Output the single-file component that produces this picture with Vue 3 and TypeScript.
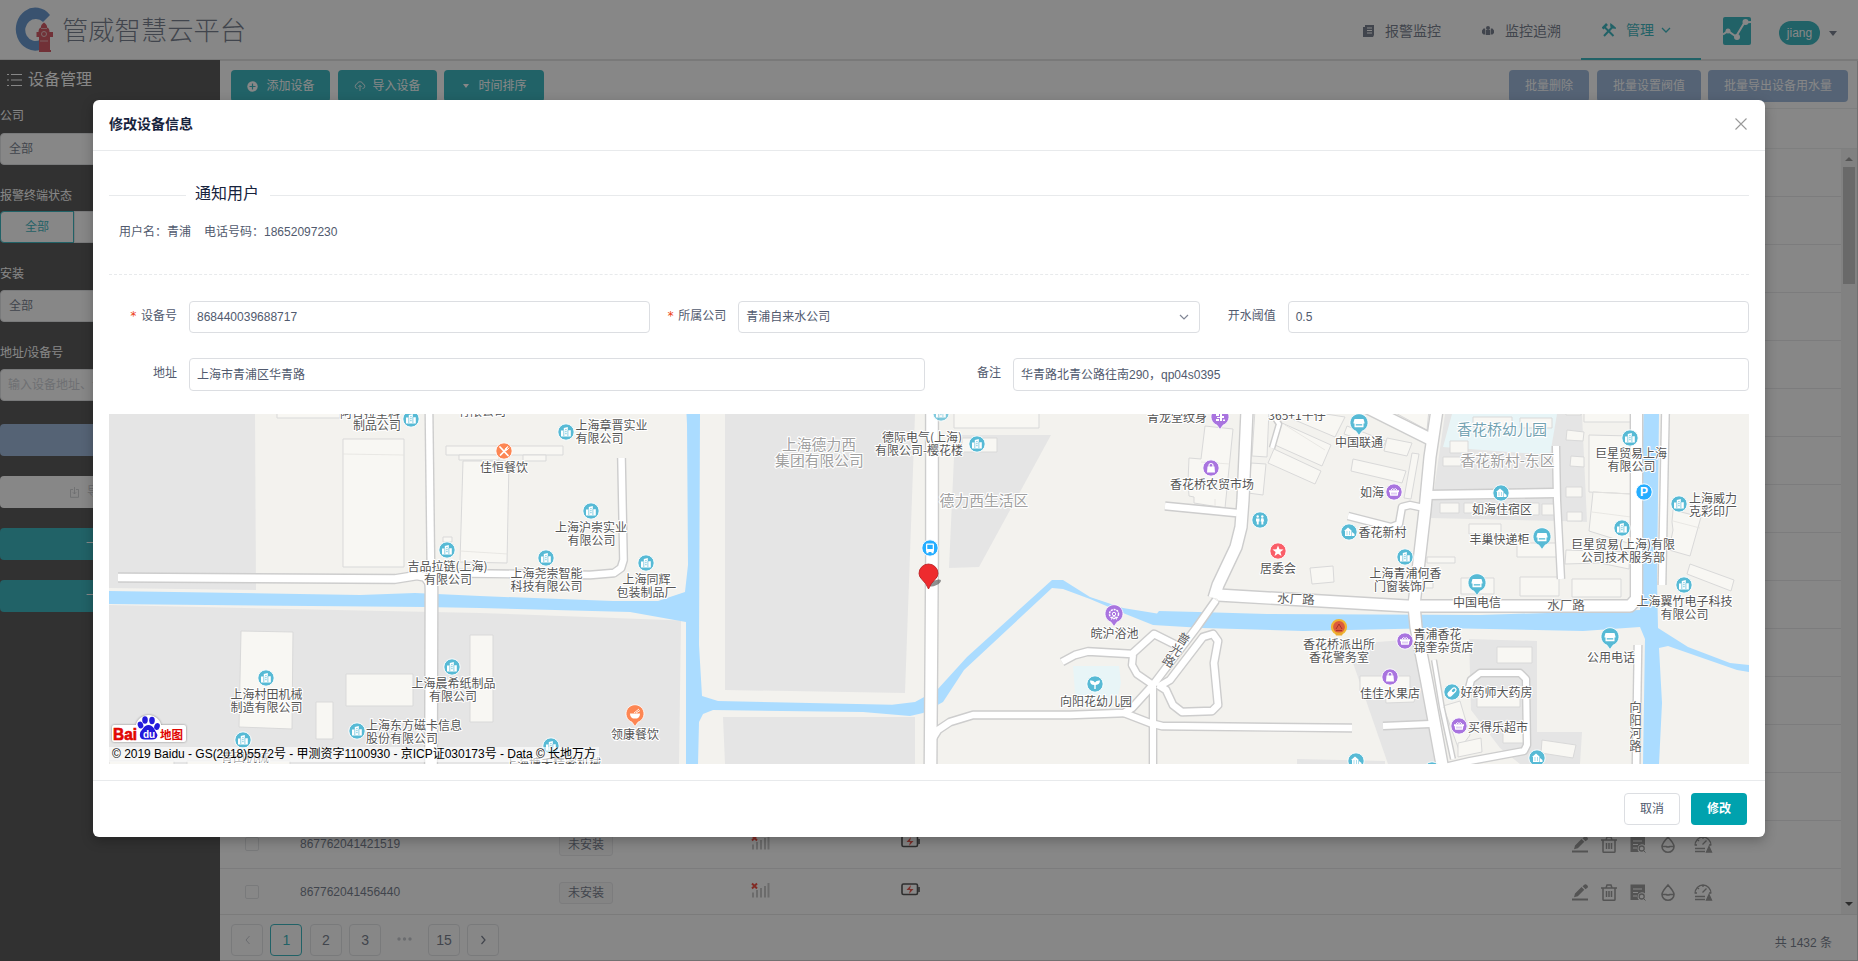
<script setup lang="ts">
type Pt = [number, number]
interface Line { text: string; x: number; y: number; anchor?: 'start' | 'middle'; kind?: string; rotate?: number }
interface Marker { icon: string; x: number; y: number; color: string; pin?: boolean; faded?: boolean }

const TEAL = '#57bad5'
const PURPLE = '#a974df'
const ORANGE = '#fd8653'
const BLUE = '#25adff'

const grey: string[] = [
  '109,414 255,414 256,590 109,588',
  '109,605 480,613 681,620.5 679,764 109,764',
  '725,414 915,414 905,693 725,690',
  '723,717 915,717 915,764 725,764',
  '955,435 1051,435 979,567 949,568',
  '1445,414 1582,414 1587,522 1560,521 1430,518',
  '1352,660 1365,643 1415,639 1442,764 1388,764',
  '1469,639 1537,641 1537,732 1582,732 1580,764 1520,764 1500,748 1471,710',
  '1297,759 1385,761 1385,764 1297,764',
]

const cyan: string[] = [
  '1452,414 1557,414 1550,455 1443,447',
  '1073,666 1119,666 1121,683 1117,700 1104,706 1076,706',
]

const water: string[] = [
  '109,591 360,595 415,593 480,596 613,601 658,601 685,592 688,565 687,424 686.5,414 700,414 699,645 702,696 718,701 892,704.7 915,702 937,690 967,657 1052,580 1063,580 1090,597 1123,608 1157,613.5 1159,611 1198,612 1267,614 1480,615 1640,610 1643.5,414 1659,414 1657,580 1658,628 1688,647 1730,663 1749,665 1749,672 1737,670 1668,646 1659,648 1662,703 1659,764 1643,764 1645,639 1640,627 1583,631 1440,628 1303,631 1203,628 1153,625 1123,613 1090,599 1063,589 1052,588 964,670 943,702 923,713 910,716 863,712 713,710 703,714 699,722 698,764 686,764 686,622 630,612 480,608 425,607 109,604',
]

function rect(x1: number, y1: number, x2: number, y2: number): string {
  return `${x1},${y1} ${x2},${y1} ${x2},${y2} ${x1},${y2}`
}

const buildings: string[] = [
  rect(343, 439, 404, 567), rect(277, 410, 340, 418), rect(446, 446, 563, 455), rect(459, 455, 499, 460),
  rect(523, 455, 546, 461), '463,461 509,461 507,563 460,562', rect(443, 537, 452, 542),
  '241,631 293,632 292,729 239,727', rect(346, 674, 413, 706), rect(316, 702, 333, 739), rect(470, 635, 493, 722),
  rect(109, 761, 174, 766), rect(187, 761, 290, 766),
  rect(954, 410, 1039, 428), rect(962, 438, 997, 452), rect(857, 454, 863, 467),
  '1205,426 1233,429 1225,508 1194,503 1194,497 1189,496 1188,482 1189,458 1201,459',
  '1255,410 1269,410 1267,457 1252,456', '1251,463 1266,464 1263,495 1248,493',
  '1282,423 1331,445 1322,466 1275,445', '1274,449 1321,471 1315,484 1268,463', '1300,410 1345,417 1335,437 1290,418',
  '1310,568 1333,566 1334,582 1312,584', '1353,459 1406,471 1402,483 1351,471', '1412,453 1419,454 1411,499 1404,498',
  '1387,438 1412,443 1407,456 1384,451', '1390,410 1429,410 1427,430', '1347,426 1386,441 1383,447 1344,434', rect(1360, 676, 1410, 691),
  '1385,690 1417,690 1414,702 1386,703', rect(1427, 557, 1455, 563), rect(1425, 580, 1433, 588),
  rect(1450, 441, 1468, 453), rect(1443, 457, 1461, 466), rect(1473, 417, 1512, 427), rect(1520, 418, 1552, 428),
  '1567,430 1584,432 1583,441 1566,440', '1571,456 1584,457 1584,467 1570,466', rect(1566, 487, 1582, 497), rect(1567, 512, 1582, 521),
  rect(1566, 410, 1581, 415), rect(1584, 410, 1631, 422), '1589,435 1631,436 1631,494 1589,492', '1593,492 1631,494 1631,544 1589,531',
  '1566,550 1630,552 1629,569 1600,563 1565,564',
  rect(1440, 503, 1459, 513), rect(1464, 503, 1490, 513), rect(1523, 503, 1539, 515), rect(1542, 504, 1559, 515),
  rect(1469, 524, 1501, 534), rect(1517, 543, 1559, 557), rect(1461, 578, 1494, 594), rect(1520, 577, 1559, 596), rect(1572, 579, 1621, 597),
  rect(1497, 647, 1532, 663), rect(1477, 690, 1520, 707), rect(1503, 723, 1527, 743), '1542,740 1576,745 1573,758 1541,753',
  '1443,706 1460,701 1470,735 1459,750', '1458,743 1481,738 1482,752 1458,757', '1673,510 1701,517 1690,556 1669,550 1673,530 1672,522', '1690,564 1734,580 1731,591 1687,574',
]

const seams: string[] = ['343,454 404,455', '460,551 508,554', '1201,462 1230,464', '1673,521 1700,528', '1285,425 1325,450', '1593,492 1631,494', '1592,512 1631,517', '1215,499 1215,506']

interface Road { w: number; pts: string }
const roads: Road[] = [
  { w: 7.5, pts: '118,577.5 395,579 417,575.5 425,577 430,584' },
  { w: 6.5, pts: '430,573 520,574 590,575 614,573 621,568 623.5,560 621.5,458' },
  { w: 6.5, pts: '429,410 431,575' },
  { w: 11.5, pts: '431,575 431.5,590 431,770' },
  { w: 11.5, pts: '932,410 932,560 930.5,770' },
  { w: 6.5, pts: '933,738 938,730 950,722 973,715 1070,715 1124,713 1132,708 1153,685 1197,627 1216,600' },
  { w: 6.5, pts: '1124,713 1150,723 1162,726 1352,728' },
  { w: 6, pts: '1153,685 1153,770' },
  { w: 6.5, pts: '1062,662 1075,655 1088,651.5 1132,654 1154,634 1180,647' },
  { w: 6, pts: '1133,655 1132,665 1137,674 1153,685' },
  { w: 6.5, pts: '1158,687 1170,680 1203,637 1213,634 1218,641 1214,663 1218,705 1212,711 1182,712 1173,705 1166,690 1158,685' },
  { w: 6.5, pts: '1165,506 1237,513' },
  { w: 11, pts: '1247,410 1243,500 1241,527 1236,547 1218,585 1214,598' },
  { w: 11, pts: '1218,595 1407,606 1630,606 1636.5,599 1636.5,410' },
  { w: 11, pts: '1437,410 1430,457 1425,510 1414,605 1416,627 1427,683 1443,770' },
  { w: 11, pts: '1368,408 1430,439' },
  { w: 6, pts: '1348,516 1391,527 1399,524 1402,507 1410,505 1424,508' },
  { w: 8, pts: '1427,495 1555,493' },
  { w: 6, pts: '1556,446 1557,500 1561,579' },
  { w: 6, pts: '1383,726 1430,724' },
  { w: 3.5, pts: '1434,660 1442,708 1453,759' },
  { w: 6, pts: '1440,768 1470,761 1524,751 1527,745 1526,679 1520,673 1480,673 1471,680 1468,692' },
  { w: 6.5, pts: '1665.5,410 1662,585' },
  { w: 6.5, pts: '1638,645 1636,770' },
  { w: 4, pts: '1275,418 1279,424 1272,448' },
]

const markers: Marker[] = [
  ...([[411, 419], [447, 550], [266, 678], [452, 667], [357, 731], [243, 740], [566, 432], [591, 511], [546, 558], [646, 563], [551, 746], [977, 444], [1405, 557], [1630, 438], [1622, 528], [1679, 504], [1684, 585]] as Pt[])
    .map(([x, y]) => ({ icon: 'office', x, y, color: TEAL })),
  { icon: 'office', x: 941, y: 413, color: TEAL, faded: true },
  ...([[1349, 532], [1356, 761], [1432, 770], [1501, 493], [1537, 758]] as Pt[]).map(([x, y]) => ({ icon: 'house', x, y, color: TEAL })),
  ...([[1359, 423], [1542, 537], [1477, 583], [1610, 637]] as Pt[]).map(([x, y]) => ({ icon: 'shop', x, y, color: TEAL, pin: true })),
  ...([[1211, 468], [1390, 677]] as Pt[]).map(([x, y]) => ({ icon: 'bag', x, y, color: PURPLE })),
  ...([[1394, 492], [1405, 641], [1459, 726]] as Pt[]).map(([x, y]) => ({ icon: 'basket', x, y, color: PURPLE })),
  { icon: 'scissors', x: 1220, y: 417, color: PURPLE, pin: true },
  { icon: 'wheel', x: 1114, y: 614, color: PURPLE, pin: true },
  { icon: 'food', x: 504, y: 451, color: ORANGE },
  { icon: 'bowl', x: 635, y: 714, color: ORANGE, pin: true },
  { icon: 'wc', x: 1260, y: 520, color: TEAL },
  { icon: 'star', x: 1278, y: 551, color: '#fa5e68' },
  { icon: 'bus', x: 930, y: 548, color: BLUE },
  { icon: 'sprout', x: 1095, y: 684, color: TEAL },
  { icon: 'parking', x: 1644, y: 492, color: BLUE },
  { icon: 'pill', x: 1452, y: 692, color: TEAL },
]

const labels: Line[] = [
  { text: '阿普拉塑料', x: 370, y: 413 }, { text: '制品公司', x: 377, y: 425.5 },
  { text: '有限公司', x: 482, y: 411 }, { text: '佳恒餐饮', x: 504, y: 467.5 },
  { text: '吉品拉链(上海)', x: 447.5, y: 566 }, { text: '有限公司', x: 448, y: 579 },
  { text: '上海村田机械', x: 266.5, y: 694 }, { text: '制造有限公司', x: 266.5, y: 707 },
  { text: '上海晨希纸制品', x: 453.5, y: 683 }, { text: '有限公司', x: 453, y: 696 },
  { text: '上海东方磁卡信息', x: 366, y: 725.5, anchor: 'start' }, { text: '股份有限公司', x: 366, y: 738.5, anchor: 'start' },
  { text: '青田机械', x: 245, y: 757 }, { text: '上海塘禾精密机械', x: 553, y: 763 },
  { text: '上海章晋实业', x: 575.5, y: 425.5, anchor: 'start' }, { text: '有限公司', x: 575.5, y: 438.5, anchor: 'start' },
  { text: '上海沪崇实业', x: 591, y: 527 }, { text: '有限公司', x: 591.5, y: 540 },
  { text: '上海尧崇智能', x: 546.5, y: 573.5 }, { text: '科技有限公司', x: 546.5, y: 586.5 },
  { text: '上海同辉', x: 646.5, y: 579 }, { text: '包装制品厂', x: 646.5, y: 592 },
  { text: '领康餐饮', x: 635, y: 734 },
  { text: '上海德力西', x: 819, y: 444, kind: 'area' }, { text: '集团有限公司', x: 819.5, y: 460.5, kind: 'area' },
  { text: '德际电气(上海)', x: 922, y: 437.5 }, { text: '有限公司-樱花楼', x: 919, y: 450.5 },
  { text: '德力西生活区', x: 984, y: 500, kind: 'area' },
  { text: '皖沪浴池', x: 1114.5, y: 633.5 }, { text: '向阳花幼儿园', x: 1096, y: 701 },
  { text: '青龙堂纹身', x: 1177, y: 417.5 }, { text: '365+1牛仔', x: 1297, y: 415.5 },
  { text: '香花桥农贸市场', x: 1212, y: 484 }, { text: '居委会', x: 1278, y: 568 },
  { text: '水厂路', x: 1296, y: 599, kind: 'road', rotate: 2 }, { text: '水厂路', x: 1566, y: 605, kind: 'road' },
  { text: '普', x: 1183.5, y: 639, kind: 'road', rotate: 32 }, { text: '光', x: 1176.500, y: 650, kind: 'road', rotate: 32 }, { text: '路', x: 1169, y: 661, kind: 'road', rotate: 32 },
  { text: '向', x: 1635.5, y: 707, kind: 'road' }, { text: '阳', x: 1635.5, y: 720, kind: 'road' }, { text: '河', x: 1635.5, y: 733, kind: 'road' }, { text: '路', x: 1635.5, y: 746, kind: 'road' },
  { text: '中国联通', x: 1359, y: 442.5 }, { text: '如海', x: 1372, y: 492.5 }, { text: '香花新村', x: 1358.5, y: 532.5, anchor: 'start' },
  { text: '上海青浦何香', x: 1405.5, y: 573 }, { text: '门窗装饰厂', x: 1404, y: 586 },
  { text: '香花桥派出所', x: 1339, y: 644.5 }, { text: '香花警务室', x: 1339, y: 657.5 },
  { text: '青浦香花', x: 1413.5, y: 634.5, anchor: 'start' }, { text: '锦奎杂货店', x: 1413.5, y: 647.5, anchor: 'start' },
  { text: '佳佳水果店', x: 1390, y: 693.5 }, { text: '好药师大药房', x: 1460.5, y: 692, anchor: 'start' }, { text: '买得乐超市', x: 1468, y: 727, anchor: 'start' },
  { text: '香花桥幼儿园', x: 1502, y: 429.5, kind: 'school' }, { text: '香花新村-东区', x: 1507.5, y: 460.5, kind: 'area' },
  { text: '如海住宿区', x: 1502, y: 509.5 }, { text: '丰巢快递柜', x: 1499.5, y: 539 }, { text: '中国电信', x: 1477, y: 602.5 }, { text: '公用电话', x: 1611, y: 657.5 },
  { text: '巨星贸易上海', x: 1631, y: 453.5 }, { text: '有限公司', x: 1631.5, y: 466.5 },
  { text: '巨星贸易(上海)有限', x: 1623, y: 544.5 }, { text: '公司技术服务部', x: 1623, y: 557.5 },
  { text: '上海威力', x: 1689, y: 498, anchor: 'start' }, { text: '克彩印厂', x: 1689, y: 511, anchor: 'start' },
  { text: '上海翼竹电子科技', x: 1684.5, y: 601.5 }, { text: '有限公司', x: 1684.5, y: 614.5 },
]

const rows: string[] = [...Array(14).fill(''), '867762041421519', '867762041456440']
</script>

<template>
  <div class="page">
    <header class="top">
      <svg class="logo" width="40" height="46" viewBox="0 0 40 46">
        <path d="M36 8A19.5 21.5 0 1 0 26 43L26 33A10.5 11 0 1 1 29 15Z" fill="#3d7cc4" />
        <path d="M25 45V30H22.500V25H24.500Q24.500 21 27 20.500Q26.500 18 30 15.500Q33.500 18 33 20.500Q35.500 21 35.500 25H39V30H36V43H37V45Z" fill="#c92a38" />
        <circle cx="30" cy="27" r="2.500" fill="none" stroke="#e6b5b9" />
        <path d="M26 34h8M27 21.500h6" stroke="#e6b5b9" stroke-width=".8" />
      </svg>
      <h1>管威智慧云平台</h1>
      <nav>
        <a class="n1"><svg width="12" height="14" viewBox="0 0 12 14"><path d="M2 1h9v10l-1 2H0V3h2z" fill="currentColor" /><path d="M4 4h5M4 6.500h5M4 9h5" stroke="#fff" /></svg><span>报警监控</span></a>
        <a class="n2"><svg width="12" height="12" viewBox="0 0 12 12" fill="currentColor"><circle cx="6" cy="3" r="2" /><path d="M3.800 5h4.400v5H3.800zM0 5.500l1.500-2h1.700v6H1.500L0 8zM12 5.500l-1.500-2H8.800v6h1.700L12 8z" /></svg><span>监控追溯</span></a>
        <a class="n3"><svg width="14" height="14" viewBox="0 0 14 14" fill="none" stroke="currentColor"><path d="M2 3.500 11.500 13" stroke-width="2" /><path d="M.5 5.500 5 1" stroke-width="2.600" /><path d="M2 13 10 4.500" stroke-width="2" /><path d="M9 1.500Q8.500 5 13 5L11 3Z" stroke-width="1.600" /></svg><span>管理</span>
          <svg class="chev" width="10" height="7" viewBox="0 0 10 7"><path d="M1 1l4 4 4-4" fill="none" stroke="currentColor" stroke-width="1.300" /></svg></a>
      </nav>
      <svg class="chart" width="28" height="28" viewBox="0 0 28 28"><rect width="28" height="28" rx="2" fill="#00a2ae" /><path d="M0 17.500 5 14l8 5.500 8.500-14L28 5" fill="none" stroke="#fff" stroke-width="2" /><circle cx="5" cy="14" r="2.500" fill="#fff" /><circle cx="14" cy="20" r="3" fill="#fff" /><circle cx="22.500" cy="5" r="3" fill="#fff" /></svg>
      <span class="user">jiang</span>
      <i class="caret"></i>
    </header>

    <div class="body">
      <aside>
        <h2><svg width="15" height="14" viewBox="0 0 15 14" stroke="currentColor"><path d="M4 1.500h11M4 7h11M4 12.500h11M0 1.500h2M0 7h2M0 12.500h2" /></svg>设备管理</h2>
        <label>公司</label>
        <div class="field">全部</div>
        <label class="tight">报警终端状态</label>
        <div class="radios"><span class="on">全部</span><span></span><span></span></div>
        <label>安装</label>
        <div class="field">全部</div>
        <label>地址/设备号</label>
        <div class="field ph">输入设备地址、设备号</div>
        <div class="sbtn blue"></div>
        <div class="sbtn white"><svg width="9" height="11" viewBox="0 0 9 11" fill="none" stroke="currentColor"><path d="M3 2.500H.5v7.800h8V2.500H6M4.500 0v7M2.800 5.200 4.500 7l1.700-1.800" stroke-width=".8" /></svg>导出</div>
        <div class="sbtn teal">一</div>
        <div class="sbtn teal">一</div>
      </aside>
      <main>
        <div class="tools">
          <button><svg width="11" height="11" viewBox="0 0 11 11"><circle cx="5.500" cy="5.500" r="5.200" fill="#fff" /><path d="M5.500 2.500v6M2.500 5.500h6" stroke="#00a2ae" stroke-width="1.200" /></svg>添加设备</button>
          <button class="b2"><svg width="12" height="10" viewBox="0 0 12 10" fill="none" stroke="#fff" stroke-width=".8"><path d="M3.500 7.500H3A2.300 2.300 0 0 1 3 3Q3.500.7 6 .7T9 3a2.300 2.300 0 0 1 0 4.500h-.5M6 10V4.500M4.300 6 6 4.300 7.700 6" /></svg>导入设备</button>
          <button class="b3"><i></i>时间排序</button>
          <div class="grow"></div>
          <button class="blue g1">批量删除</button>
          <button class="blue g2">批量设置阀值</button>
          <button class="blue g3">批量导出设备用水量</button>
        </div>
        <div class="thead"></div>
        <div class="tbody">
          <div class="rows">
            <div v-for="(r, i) in rows" :key="i" class="row">
              <template v-if="r">
                <i class="check"></i>
                <span class="num">{{ r }}</span>
                <span class="tag">未安装</span>
                <svg class="signal" width="19" height="17" viewBox="0 0 19 17"><path d="M2 15.500v-5M6 15.500V8M10 15.500V6M14 15.500V4M17.500 15.500V1" stroke="#b8b8b8" stroke-width="2" /><path d="M1 1.500l5 5M6 1.500l-5 5" stroke="#f21b0c" stroke-width="2" /></svg>
                <svg class="battery" width="19" height="13" viewBox="0 0 19 13"><rect x="1" y="1" width="15.500" height="10.500" rx="1.500" fill="none" stroke="#222" stroke-width="1.600" /><path d="M18 4v5" stroke="#222" stroke-width="1.600" /><path d="M10 2 5.500 7H9l-1 4 4.500-5H9z" fill="#e8281c" /></svg>
                <div class="acts">
                  <svg viewBox="0 0 16 16"><path d="M0 15h16" stroke="currentColor" stroke-width="2" /><path d="M2 12.800 3 9l6.500-6.500 2.800 2.800-6.500 6.500zM10.500 1.800 12 .4Q13.500-.9 15 .5t.8 2.500L13.500 4.800z" fill="currentColor" /></svg>
                  <svg viewBox="0 0 16 16" fill="none" stroke="currentColor" stroke-width="1.500"><path d="M0 3.600h16M5 3.500 6 .5h4l1 3M2 4v11q0 .8.800.8h10.400q.8 0 .8-.8V4M5.500 6.500v6M8 6.500v6M10.500 6.500v6" /></svg>
                  <svg viewBox="0 0 16 16"><path d="M.5 0h14.500V9a4 4 0 0 0-6 6.500H.5z" fill="currentColor" /><path d="M3 4.500h9M3 8h5M3 11.500h4" stroke="#fff" stroke-width="1.100" /><circle cx="11.700" cy="12" r="2.500" fill="none" stroke="currentColor" stroke-width="1.300" /><path d="M13.500 14l2 2" stroke="currentColor" /></svg>
                  <svg viewBox="0 0 16 16" fill="none" stroke="currentColor" stroke-width="1.600"><path d="M8 .5Q14 7 14 10a6 5.800 0 0 1-12 0Q2 7 8 .5zM2.500 10h3.500q2 1 4 0h3.500" /></svg>
                  <svg class="wide" viewBox="0 0 18 17" fill="none" stroke="currentColor" stroke-width="1.300"><path d="M1 9.500A8 8.500 0 0 1 17 9.500M1 9h2M15 9h2M9 1v2M3.500 3.500 5 5M8.500 8.500 12.500 4.500M1 12.500h10M1 15.500h10" /><path d="M15 10.500 17.500 16h-5z" fill="currentColor" /></svg>
                </div>
              </template>
            </div>
          </div>
          <div class="scroll"><i class="up"></i><b></b><i class="down"></i></div>
        </div>
        <div class="foot">
          <span class="pg dim"><svg width="7" height="10" viewBox="0 0 7 10"><path d="M5.500 1 2 5l3.500 4" fill="none" stroke="currentColor" /></svg></span>
          <span class="pg cur">1</span><span class="pg">2</span><span class="pg">3</span>
          <span class="pg dots"><svg width="15" height="4" viewBox="0 0 15 4" fill="currentColor"><circle cx="2" cy="2" r="1.700" /><circle cx="7.500" cy="2" r="1.700" /><circle cx="13" cy="2" r="1.700" /></svg></span>
          <span class="pg">15</span>
          <span class="pg"><svg width="7" height="10" viewBox="0 0 7 10"><path d="M1.500 1 5 5 1.500 9" fill="none" stroke="currentColor" stroke-width="1.200" /></svg></span>
          <span class="total">共 1432 条</span>
        </div>
      </main>
    </div>

    <div class="mask">
      <section class="modal">
        <div class="mhead"><b>修改设备信息</b><svg width="12" height="12" viewBox="0 0 12 12"><path d="M.5.500l11 11M11.500.500l-11 11" stroke="#999" stroke-width="1.100" /></svg></div>
        <div class="mbody">
          <div class="divider"><i></i><span>通知用户</span><u></u></div>
          <p class="notice"><span>用户名：青浦</span><span>电话号码：18652097230</span></p>
          <div class="dash"></div>
          <div class="line three">
            <div class="item"><label><em>*</em>设备号</label><div class="input">868440039688717</div></div>
            <div class="item"><label><em>*</em>所属公司</label><div class="input">青浦自来水公司<svg width="10" height="7" viewBox="0 0 10 7"><path d="M1 1l4 4 4-4" fill="none" stroke="#808695" stroke-width="1.200" /></svg></div></div>
            <div class="item"><label>开水阈值</label><div class="input">0.5</div></div>
          </div>
          <div class="line two">
            <div class="item"><label>地址</label><div class="input low">上海市青浦区华青路</div></div>
            <div class="item"><label>备注</label><div class="input low">华青路北青公路往南290，qp04s0395</div></div>
          </div>
          <svg class="map" width="1640" height="350" viewBox="109 414 1640 350">
            <rect x="109" y="414" width="1640" height="350" fill="#f3f2ee" />
            <polygon v-for="(p, i) in grey" :key="'g' + i" :points="p" fill="#e5e5e5" />
            <polygon v-for="(p, i) in cyan" :key="'c' + i" :points="p" fill="#e8f5f7" />
            <polygon v-for="(p, i) in water" :key="'w' + i" :points="p" fill="#abdcff" />
            <polygon v-for="(p, i) in buildings" :key="'b' + i" :points="p" class="bld" />
            <polyline v-for="(p, i) in seams" :key="'s' + i" :points="p" class="seam" />
            <polyline v-for="(r, i) in roads" :key="'o' + i" :points="r.pts" class="road" stroke="#cdcdcd" :stroke-width="r.w + 2.8" />
            <polyline v-for="(r, i) in roads" :key="'r' + i" :points="r.pts" class="road" stroke="#fff" :stroke-width="r.w" />

            <g v-for="(l, i) in labels" :key="'l' + i" :transform="`translate(${l.x} ${l.y}) rotate(${l.rotate ?? 0})`">
              <text :class="['lbl', l.kind]" :text-anchor="l.anchor ?? 'middle'" :y="l.kind === 'area' || l.kind === 'school' ? 5.5 : 4.500">{{ l.text }}</text>
            </g>

            <g v-for="(m, i) in markers" :key="'m' + i" :transform="`translate(${m.x} ${m.y})`" :opacity="m.faded ? 0.75 : 1">
              <path v-if="m.pin" d="M0 12.500-3 8.200A9 9 0 1 1 3 8.200Z" :fill="m.color" stroke="#fff" stroke-width=".8" />
              <circle v-else r="8.200" :fill="m.color" stroke="#fff" stroke-width="1" />
              <g fill="#fff">
                <g v-if="m.icon === 'office'"><path d="M-5 4.500V-1.500H-2.200V-4L1.800-5V-1.800H4.800V4.500z" /><path d="M-2.200-1.500V4M1.900-2V4M-1-2.300H.8M-1-.3H.8M-1 1.700H.8" stroke="#57bad5" stroke-width=".7" /></g>
                <g v-else-if="m.icon === 'house'"><path d="M-5-1-1-4.500 2.500-1.500V4H-4V-1zM3 0 5.500 2v2H3z" /><path d="M-2.500 0h1M0 0h1M-2.500 2h1M0 2h1" stroke="#57bad5" /></g>
                <g v-else-if="m.icon === 'shop'"><path d="M-4.500-4h9L5.500-.5V.5h-11V-.5zM-4.500.5h9v3.800h-9z" /><path d="M-3.200 1.200h6.400v1.300h-6.400z" fill="#57bad5" /></g>
                <g v-else-if="m.icon === 'bag'"><path d="M-4 4.500-3.500-1.500h7L4 4.500z" /><path d="M-2-1v-1.500a2 2 0 0 1 4 0V-1" fill="none" stroke="#fff" stroke-width="1.200" /></g>
                <g v-else-if="m.icon === 'basket'"><path d="M-5-1.800H5V0h-.6L3.800 3.800h-7.600L-4.400 0H-5z" /><path d="M-3-2q1.500-2.500 3-.5Q1.500-4.500 3-2" fill="none" stroke="#fff" /><path d="M-2 .5v2M0 .5v2M2 .5v2" stroke="#a974df" stroke-width=".7" /></g>
                <g v-else-if="m.icon === 'scissors'"><path d="M-4-3h3v2h-3zM0-4h2v3h2v2H2v3H0V1h-3v-1h3zM-4 2h3v2h-3zM3 2.500h2V4H3z" /></g>
                <g v-else-if="m.icon === 'wheel'" fill="none" stroke="#fff"><circle r="4.500" stroke-dasharray="2 .9" stroke-width="1.500" /><circle r="1.700" /><path d="M0 1-2.500 5.500M0 1 2.500 5.500" /></g>
                <g v-else-if="m.icon === 'food'" stroke="#fff" stroke-linecap="round"><path d="M-4-4 4 4.500" stroke-width="1.800" /><path d="M-3.500 4 2.500-2" stroke-width="1.700" /><path d="M1-2 3.500-4.500M2.500-.5 5-3M1.500-1.500l2.500-2.300" stroke-width=".9" /></g>
                <g v-else-if="m.icon === 'bowl'"><path d="M-5-.5H5Q5 3 2 4.500h-4Q-5 3-5-.5z" /><path d="M-1-1 4-5M1-1 5-3.500" stroke="#fff" stroke-width=".9" /></g>
                <g v-else-if="m.icon === 'wc'"><circle cx="-2.300" cy="-3.500" r="1.200" /><circle cx="2.300" cy="-3.500" r="1.200" /><path d="M-4-1.500h3.500v3h-.8v3h-1.900v-3H-4zM.6 1.500 1.200-1.800h2.200L4.200 1.500H3.300v3H1.400v-3z" /></g>
                <path v-else-if="m.icon === 'star'" d="M0-5.500 1.500-1.700 5.500-1.500 2.400 1 3.500 5 0 2.700-3.500 5-2.400 1-5.500-1.500-1.500-1.700z" />
                <g v-else-if="m.icon === 'bus'"><rect x="-4" y="-4.500" width="8" height="8.500" rx="1" /><path d="M-3.500 4h2v1.300h-2zM1.500 4h2v1.300h-2z" /><rect x="-2.700" y="-3.200" width="5.400" height="4.200" fill="#25adff" /></g>
                <path v-else-if="m.icon === 'sprout'" d="M-.7 5V1Q-5 1-5-3.500-1.500-4 0-1.500 1.500-4 5-3.500 5 .5.700 1V5z" />
                <text v-else-if="m.icon === 'parking'" class="p" text-anchor="middle" y="4.300">P</text>
                <g v-else transform="rotate(-45)"><rect x="-5.500" y="-2.500" width="11" height="5" rx="2.500" /><rect x=".3" y="-1.300" width="4" height="2.600" rx="1.300" fill="#57bad5" /></g>
              </g>
            </g>

            <g transform="translate(1339 627)"><circle r="7" fill="#dc5a3c" stroke="#f0b432" stroke-width="2.200" /><path d="M-4 5.500h8l-1 3h-6z" fill="#eaaa2d" /><path d="M0-3-3 2M0-3 3 2M-3 3.500h6" stroke="#a8322a" fill="none" /></g>

            <ellipse cx="935" cy="583" rx="6.500" ry="2.500" transform="rotate(-25 935 583)" fill="#555" opacity=".65" />
            <path d="M928.500 589Q926 583 922 579.500Q919 576.500 919 573.500A9.500 9.500 0 0 1 938 573.500Q938 576.500 935 579.500Q931 583 928.500 589Z" fill="#ee2b2e" stroke="#b5191d" stroke-width=".8" />

            <g class="baidu">
              <g class="plate" fill="#fff"><rect x="112" y="725" width="74" height="17" rx="2" /><circle cx="148.500" cy="728" r="13" /></g>
              <text x="113" y="739.500" class="bai" textLength="24" lengthAdjust="spacingAndGlyphs">Bai</text><text x="160" y="738.500" class="ditu">地图</text>
              <g fill="#2319dc">
                <ellipse cx="140.500" cy="725" rx="2.700" ry="3.500" transform="rotate(-20 140.500 725)" /><ellipse cx="145" cy="720" rx="2.800" ry="3.700" /><ellipse cx="152" cy="720.500" rx="2.800" ry="3.700" /><ellipse cx="157" cy="726.500" rx="2.700" ry="3.500" transform="rotate(20 157 726.500)" />
                <path d="M148.500 725Q152 725 154 728.500T157.500 735Q157 740 151 739.500H146Q140 740 139.800 735 139.800 731.500 143 728.500 145 725 148.500 725Z" />
              </g>
              <text x="143" y="738" class="du">du</text>
            </g>
            <rect x="109" y="747" width="490" height="15" fill="#fff" opacity=".6" />
            <text x="112" y="758" class="copy" textLength="484" lengthAdjust="spacing">© 2019 Baidu - GS(2018)5572号 - 甲测资字1100930 - 京ICP证030173号 - Data © 长地万方</text>
          </svg>
        </div>
        <div class="mfoot"><button class="cancel">取消</button><button class="ok">修改</button></div>
      </section>
    </div>
  </div>
</template>

<style>
body { margin: 0; overflow: hidden; }
</style>

<style scoped>
* { box-sizing: border-box; }
.page { position: relative; width: 1858px; height: 961px; overflow: hidden; background: #fff; color: #515a6e; font: 12px/18px "Liberation Sans", "Noto Sans CJK SC", sans-serif; display: flex; flex-direction: column; }
.top { height: 61px; flex: none; display: flex; border-bottom: 2px solid #dcdcdc; }
.logo { margin: 7px 0 0 14px; }
h1 { margin: 12px 0 0 8px; font-size: 26.3px; line-height: 38px; font-weight: 300; width: 200px; white-space: nowrap; }
nav { display: flex; margin-left: auto; height: 60px; flex: none; font-size: 14px; }
nav a { display: flex; align-items: center; height: 60px; padding-top: 2px; }
.n1 svg { margin-right: 10px; }
.n1 { margin-right: 41px; }
.n2 svg { margin-right: 11px; }
.n2 { margin-right: 20px; }
.n3 { width: 120px; padding-left: 21px; border-bottom: 2px solid #00a2ae; color: #00a2ae; }
.n3 span { margin: 0 7px 0 10px; }
.chart { margin: 17px 28px 0 22px; flex: none; }
.user { width: 41px; height: 24px; margin-top: 21px; border-radius: 12px; background: #00a2ae; color: #fff; text-align: center; line-height: 24px; }
.caret { margin: 31px 21px 0 9px; border: 4px solid transparent; border-top: 5px solid #515a6e; border-bottom: 0; height: 0; }
.body { flex: 1; display: flex; min-height: 0; }
aside { width: 220px; flex: none; margin-top: -1px; background: #282828; color: #fff; overflow: hidden; display: flex; flex-direction: column; }
h2 { margin: 7px 0 0 7px; font-size: 16px; line-height: 26px; font-weight: 400; display: flex; align-items: center; gap: 6px; }
aside label { height: 18px; margin: 16px 0 7px; flex: none; }
aside label.tight { margin-bottom: 6px; }
h2 + label { margin: 14px 0 8px; }
.field { height: 32px; flex: none; margin-bottom: 6px; background: #fff; border: 1px solid #dcdee2; border-radius: 4px; color: #515a6e; padding: 0 8px; line-height: 30px; }
.field.ph { color: #c0c4cc; padding-left: 7px; }
.radios { height: 32px; flex: none; display: flex; margin-bottom: 6px; line-height: 30px; text-align: center; }
.radios span { width: 73px; background: #fff; border: 1px solid #dcdee2; }
.radios .on { border: 1px solid #00a2ae; color: #00a2ae; border-radius: 4px 0 0 4px; width: 74px; }
.sbtn { height: 32px; border-radius: 4px; margin-top: 20px; flex: none; line-height: 32px; padding-left: 86px; }
.field + .sbtn { margin-top: 17px; }
.blue { background: #82a5d2; }
.white { background: #fff; color: #b9bcc2; padding-left: 70px; display: flex; align-items: center; gap: 8px; }
.teal { background: #00a2ae; }
main { flex: 1; display: flex; flex-direction: column; border: 1px solid #c8c8c8; border-left: 0; border-top: 0; min-width: 0; }
.tools { height: 47px; flex: none; display: flex; padding: 9px 9px 0 11px; }
button { font: inherit; border: 0; border-radius: 4px; color: #fff; background: #00a2ae; height: 32px; width: 99px; padding: 0; display: flex; align-items: center; justify-content: center; white-space: nowrap; flex: none; }
.tools button:first-child { justify-content: flex-start; padding-left: 16px; }
button svg { margin-right: 8px; }
.tools button:first-child svg { margin-right: 8.500px; }
.b2 { margin: 0 7px 0 8px; justify-content: flex-start; padding-left: 16px; }
.tools .b2 svg { margin-right: 6.500px; }
.tools button:first-child svg, .b2 svg { flex: none; }
.b3 { width: 100px; justify-content: flex-start; padding-left: 19px; }
.b3 i { border: 3.5px solid transparent; border-top: 4px solid #fff; border-bottom: 0; margin-right: 9.500px; }
.grow { flex: 1; }
button.blue { background: #82a5d2; }
.g1 { width: 80px; } .g2 { width: 104px; margin: 0 7px 0 8px; } .g3 { width: 140px; }
.thead { height: 41px; flex: none; border: solid #e8eaec; border-width: 1px 0; background: #fefefe; }
.tbody { height: 766px; flex: none; display: flex; overflow: hidden; border-bottom: 1px solid #e0e0e0; }
.rows { flex: 1; }
.row { height: 48px; border-bottom: 1px solid #e3e4e6; display: flex; align-items: center; padding-left: 25px; color: #515a6e; }
.check { width: 14px; height: 14px; border: 1px solid #dcdee2; border-radius: 2px; margin-top: -1px; }
.num { margin-left: 41px; width: 259px; margin-top: -1px; }
.tag { width: 54px; height: 22px; margin-top: 1px; border: 1px solid #e3e4e6; border-radius: 3px; background: #f7f7f7; text-align: center; line-height: 20px; }
.signal { margin: -4px 0 0 138px; }
.battery { margin: -7px 0 0 131px; }
.acts { display: flex; margin-left: 652px; color: #808080; }
.acts svg { width: 16px; height: 17px; margin-right: 13px; overflow: visible; flex: none; }
.acts svg:nth-child(3) { margin-right: 14px; }
.acts svg:nth-child(4) { margin-right: 18px; }
.acts svg.wide { width: 18px; margin: 0; }
.scroll { width: 16px; background: #f0f0f0; display: flex; flex-direction: column; align-items: center; flex: none; }
.scroll b { width: 12px; height: 117px; background: #b5b5b5; margin-top: 6px; }
.scroll i { border: 4px solid transparent; }
.up { border-bottom-color: #808080 !important; border-top: 0 !important; margin-top: 8px; }
.down { border-top-color: #202020 !important; border-bottom: 0 !important; margin: auto 0 8px; }
.foot { flex: 1; display: flex; align-items: center; padding: 4px 0 0 11px; gap: 7.4px; font-size: 14px; }
.pg { width: 32px; height: 32px; border: 1px solid #dcdee2; border-radius: 4px; display: flex; align-items: center; justify-content: center; }
.cur { border-color: #00a2ae; color: #00a2ae; }
.dim, .dots { color: #b8bcc4; }
.dots { border: 0; padding-bottom: 2px; }
.total { margin: 6px 25px 0 auto; font-size: 12px; }
.mask { position: absolute; inset: 0; background: rgba(55, 55, 55, .6); padding: 100px 0 0 93px; }
.modal { width: 1672px; height: 737px; background: #fff; border-radius: 6px; box-shadow: 0 4px 12px rgba(0, 0, 0, .25); display: flex; flex-direction: column; }
.mhead { height: 51px; flex: none; border-bottom: 1px solid #e8eaec; padding: 0 18px 2px 16px; display: flex; align-items: center; justify-content: space-between; font-size: 14px; color: #17233d; }
.mhead b { font-weight: 700; }
.mbody { padding: 0 16px; height: 629px; flex: none; }
.divider { display: flex; align-items: center; height: 24px; margin-top: 32px; font-size: 16px; color: #17233d; white-space: nowrap; }
.divider span { margin: -2px 11px 0 9px; }
.divider i { width: 77px; height: 1px; background: #e8eaec; }
.divider u { flex: 1; height: 1px; background: #e8eaec; }
.notice { margin: 16px 0 0 10px; height: 18px; display: flex; gap: 13px; }
.dash { border-top: 1px dashed #e8eaec; margin-top: 33px; }
.line { display: grid; gap: 8px; height: 32px; }
.three { grid-template-columns: repeat(3, 1fr); margin-top: 26px; }
.two { grid-template-columns: repeat(2, 1fr); margin-top: 25px; }
.item { display: flex; }
.item label { width: 80px; padding-right: 12px; text-align: right; line-height: 30px; flex: none; white-space: nowrap; }
em { color: #ed4014; font-family: "DejaVu Sans Mono", monospace; margin-right: 4px; font-style: normal; line-height: 1; }
.input { flex: 1; border: 1px solid #dcdee2; border-radius: 4px; padding: 0 10px 0 7px; line-height: 30px; display: flex; justify-content: space-between; align-items: center; }
.input.low { padding-top: 1px; }
.map { display: block; margin-top: 24px; }
.bld { fill: #f8f7f3; stroke: #d9d9d9; stroke-width: 1; stroke-linejoin: round; }
.seam { fill: none; stroke: #e4e3df; stroke-width: .8; }
.road { fill: none; stroke-linejoin: round; }
.lbl { font: 12px "Noto Sans CJK SC", sans-serif; fill: #555; stroke: #fff; stroke-width: 2.2px; stroke-linejoin: round; paint-order: stroke; }
.lbl.area { font-size: 14.8px; fill: #a0a0a0; }
.lbl.school { font-size: 15px; fill: #74a3b2; }
.lbl.road { font-size: 12.5px; stroke-width: 1.4px; fill: #606060; }
.p { font: bold 12px "Liberation Sans", sans-serif; }
.plate { filter: drop-shadow(0 0 1px #888); }
.bai { font: bold 17px "Liberation Sans", sans-serif; fill: #e10602; stroke: #e10602; stroke-width: .7px; }
.ditu { font: bold 11.5px "Noto Sans CJK SC", sans-serif; fill: #e10602; }
.du { font: bold 10px "Liberation Sans", sans-serif; fill: #fff; }
.copy { font: 12px "Liberation Sans", "Noto Sans CJK SC", sans-serif; fill: #000; }
.mfoot { flex: 1; border-top: 1px solid #e8eaec; display: flex; justify-content: flex-end; padding: 12px 18px 0 0; gap: 11px; }
.mfoot button { width: 56px; }
.mfoot .cancel { background: #fff; border: 1px solid #dcdee2; color: #515a6e; }
.mfoot .ok { font-weight: 700; }
</style>
